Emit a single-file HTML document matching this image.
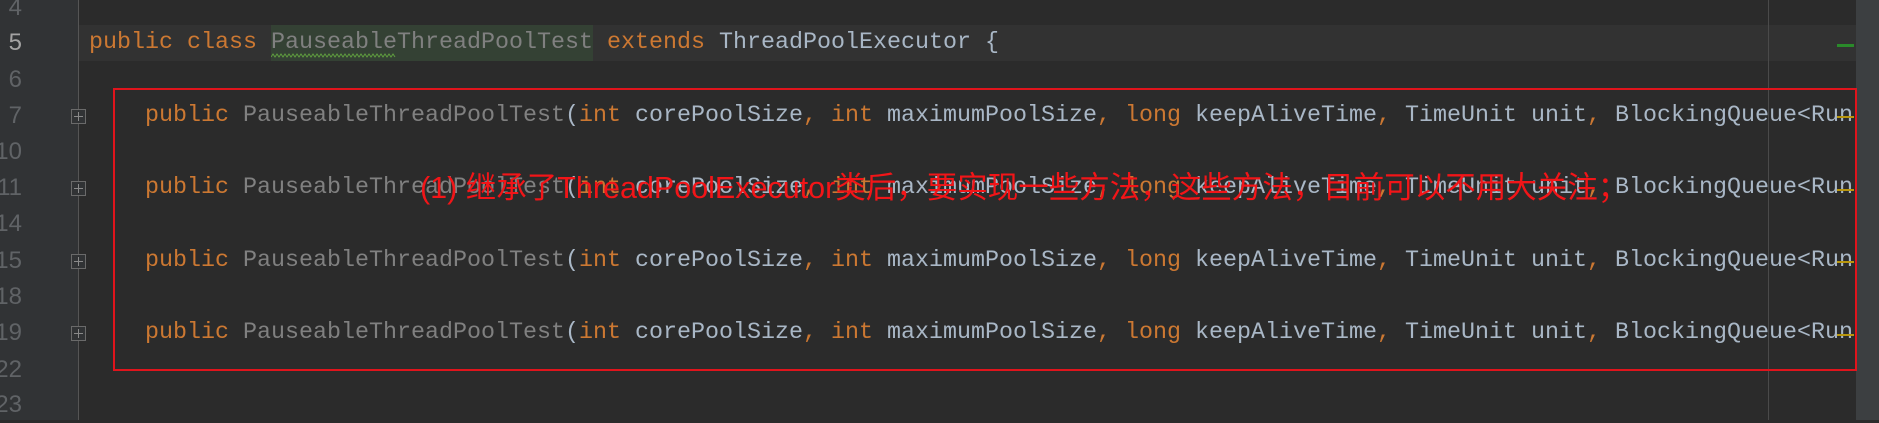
<!DOCTYPE html>
<html><head><meta charset="utf-8"><style>
html,body{margin:0;padding:0}
body{width:1879px;height:420px;background:#2b2b2b;position:relative;overflow:hidden;font-family:"Liberation Mono",monospace}
.gut{position:absolute;left:0;top:0;width:78px;height:420px;background:#313335;border-right:1px solid #555}
.hl{position:absolute;left:79px;top:25px;width:1777px;height:36px;background:#323232}
.ln{position:absolute;right:1857px;width:60px;text-align:right;color:#606366;font-size:24px;line-height:36px;font-family:"Liberation Sans",sans-serif}
.code{position:absolute;left:0;top:0;width:1855px;height:420px;overflow:hidden}
.c{position:absolute;white-space:pre;font-size:23.33px;line-height:36px;color:#a9b7c6}
.k{color:#cc7832}.g{color:#808080}
.fold{position:absolute;left:71px;width:13px;height:13px;border:1px solid #6a6a6a;background:#313335}
.fold:after{content:"";position:absolute;left:2px;top:6px;width:9px;height:1px;background:#8a8a8a}
.fold:before{content:"";position:absolute;left:6px;top:2px;width:1px;height:9px;background:#8a8a8a}
.strip{position:absolute;left:1856px;top:0;width:23px;height:420px;background:#3c3f41}
.margin{position:absolute;left:1768px;top:0;width:1px;height:420px;background:#4a4a4a}
.mk{position:absolute;left:1837px;width:17px;height:3px}
.box{position:absolute;left:113px;top:88px;width:1740px;height:279px;border:2.5px solid #e0141c}
.note{position:absolute;left:420px;top:170px;font-family:"Liberation Sans","Noto Sans CJK SC",sans-serif;font-size:30.5px;color:#f21518;white-space:nowrap;line-height:36px}
</style></head><body>
<div class="gut"></div>
<div class="hl"></div>
<div class="margin"></div>
<div class="ln" style="top:-10px;left:-38px">4</div>
<div class="ln" style="top:25px;left:-38px;color:#a4a3a3">5</div>
<div class="ln" style="top:62px;left:-38px">6</div>
<div class="ln" style="top:98px;left:-38px">7</div>
<div class="ln" style="top:134px;left:-38px">10</div>
<div class="ln" style="top:170px;left:-38px">11</div>
<div class="ln" style="top:206px;left:-38px">14</div>
<div class="ln" style="top:243px;left:-38px">15</div>
<div class="ln" style="top:279px;left:-38px">18</div>
<div class="ln" style="top:315px;left:-38px">19</div>
<div class="ln" style="top:352px;left:-38px">22</div>
<div class="ln" style="top:387px;left:-38px">23</div>
<div class="fold" style="top:109px"></div>
<div class="fold" style="top:181px"></div>
<div class="fold" style="top:254px"></div>
<div class="fold" style="top:326px"></div>
<div class="code">
<div style="position:absolute;left:271px;top:25px;width:322px;height:36px;background:#344134"></div>
<svg style="position:absolute;left:271px;top:53px" width="125" height="5"><polyline points="0,4 2,1 4,4 6,1 8,4 10,1 12,4 14,1 16,4 18,1 20,4 22,1 24,4 26,1 28,4 30,1 32,4 34,1 36,4 38,1 40,4 42,1 44,4 46,1 48,4 50,1 52,4 54,1 56,4 58,1 60,4 62,1 64,4 66,1 68,4 70,1 72,4 74,1 76,4 78,1 80,4 82,1 84,4 86,1 88,4 90,1 92,4 94,1 96,4 98,1 100,4 102,1 104,4 106,1 108,4 110,1 112,4 114,1 116,4 118,1 120,4 122,1 124,4" fill="none" stroke="#5f9e3f" stroke-width="1"/></svg>
<div class="c" style="left:89px;top:25px"><span class="k">public class </span><span class="g">PauseableThreadPoolTest</span> <span class="k">extends </span>ThreadPoolExecutor {</div>
<div class="c" style="left:145px;top:98px"><span class="k">public </span><span class="g">PauseableThreadPoolTest</span>(<span class="k">int </span>corePoolSize<span class="k">, int </span>maximumPoolSize<span class="k">, long </span>keepAliveTime<span class="k">, </span>TimeUnit unit<span class="k">, </span>BlockingQueue&lt;Run</div>
<div class="c" style="left:145px;top:170px"><span class="k">public </span><span class="g">PauseableThreadPoolTest</span>(<span class="k">int </span>corePoolSize<span class="k">, int </span>maximumPoolSize<span class="k">, long </span>keepAliveTime<span class="k">, </span>TimeUnit unit<span class="k">, </span>BlockingQueue&lt;Run</div>
<div class="c" style="left:145px;top:243px"><span class="k">public </span><span class="g">PauseableThreadPoolTest</span>(<span class="k">int </span>corePoolSize<span class="k">, int </span>maximumPoolSize<span class="k">, long </span>keepAliveTime<span class="k">, </span>TimeUnit unit<span class="k">, </span>BlockingQueue&lt;Run</div>
<div class="c" style="left:145px;top:315px"><span class="k">public </span><span class="g">PauseableThreadPoolTest</span>(<span class="k">int </span>corePoolSize<span class="k">, int </span>maximumPoolSize<span class="k">, long </span>keepAliveTime<span class="k">, </span>TimeUnit unit<span class="k">, </span>BlockingQueue&lt;Run</div>
</div>
<div class="mk" style="top:44px;background:#2a8a2a"></div>
<div class="mk" style="top:116px;height:2px;background:#b8960e"></div>
<div class="mk" style="top:189px;height:2px;background:#b8960e"></div>
<div class="mk" style="top:261px;height:2px;background:#b8960e"></div>
<div class="mk" style="top:334px;height:2px;background:#b8960e"></div>
<div class="strip"></div>
<div class="box"></div>
<div class="note">(1) 继承了ThreadPoolExecutor类后，要实现一些方法，这些方法，目前可以不用大关注；</div>
</body></html>
